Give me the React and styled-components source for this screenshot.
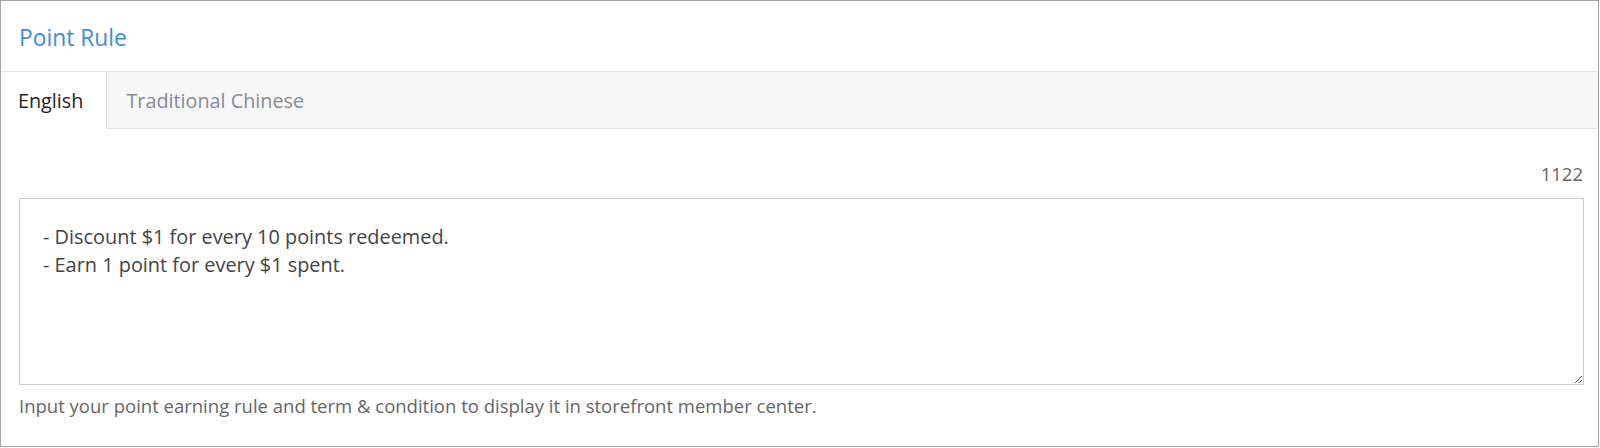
import React, { useState } from 'react';
import styled, { createGlobalStyle } from 'styled-components';

const GlobalStyle = createGlobalStyle`
  html, body {
    margin: 0;
    padding: 0;
    background: #ffffff;
    font-family: "Open Sans", "Noto Sans", sans-serif;
  }
  * { box-sizing: border-box; }
`;

const Panel = styled.section`
  width: 1599px;
  height: 447px;
  border: 1px solid #a3a3a3;
  background: #fff;
`;

const Header = styled.header`
  height: 70px;
  display: flex;
  align-items: center;
  padding: 2px 18px 0;
`;

const Title = styled.h2`
  margin: 0;
  font-size: 22.8px;
  font-weight: 400;
  color: #3a8ee0;
`;

const TabBar = styled.nav`
  display: flex;
  height: 58px;
  background: #f7f7f7;
  border-top: 1px solid #e3e3e3;
  border-bottom: 1px solid #e3e3e3;
`;

const Tab = styled.button`
  display: flex;
  align-items: center;
  height: ${p => (p.$active ? '57px' : '56px')};
  padding: 0 23px 0 ${p => (p.$active ? '17px' : '19px')};
  border: none;
  border-right: 1px solid ${p => (p.$active ? '#dcdcdc' : 'transparent')};
  background: ${p => (p.$active ? '#ffffff' : 'transparent')};
  color: ${p => (p.$active ? '#1f1f1f' : '#868b96')};
  font-family: inherit;
  font-size: 19.8px;
  cursor: pointer;
`;

const Body = styled.div`
  padding: 0 14px 0 18px;
`;

const Counter = styled.div`
  height: 69px;
  display: flex;
  align-items: center;
  justify-content: flex-end;
  padding: 20px 1px 0 0;
  font-size: 18.5px;
  color: #666;
`;

const TextArea = styled.textarea`
  display: block;
  width: 100%;
  height: 187px;
  margin: 0;
  padding: 24px 23px;
  border: 1px solid #cfcfcf;
  border-radius: 0;
  font-family: "Open Sans", "Noto Sans", sans-serif;
  font-size: 19.9px;
  line-height: 28px;
  color: #444;
  resize: vertical;
  outline: none;
`;

const Help = styled.p`
  margin: 8px 0 0;
  font-size: 18.5px;
  line-height: 25px;
  color: #666;
`;

const tabs = ['English', 'Traditional Chinese'];

export default function App() {
  const [active, setActive] = useState(0);
  const [text, setText] = useState(
    '- Discount $1 for every 10 points redeemed.\n- Earn 1 point for every $1 spent.'
  );
  return (
    <>
      <GlobalStyle />
      <Panel>
        <Header>
          <Title>Point Rule</Title>
        </Header>
        <TabBar>
          {tabs.map((t, i) => (
            <Tab key={t} $active={i === active} onClick={() => setActive(i)}>
              {t}
            </Tab>
          ))}
        </TabBar>
        <Body>
          <Counter>1122</Counter>
          <TextArea value={text} onChange={e => setText(e.target.value)} />
          <Help>Input your point earning rule and term &amp; condition to display it in storefront member center.</Help>
        </Body>
      </Panel>
    </>
  );
}
